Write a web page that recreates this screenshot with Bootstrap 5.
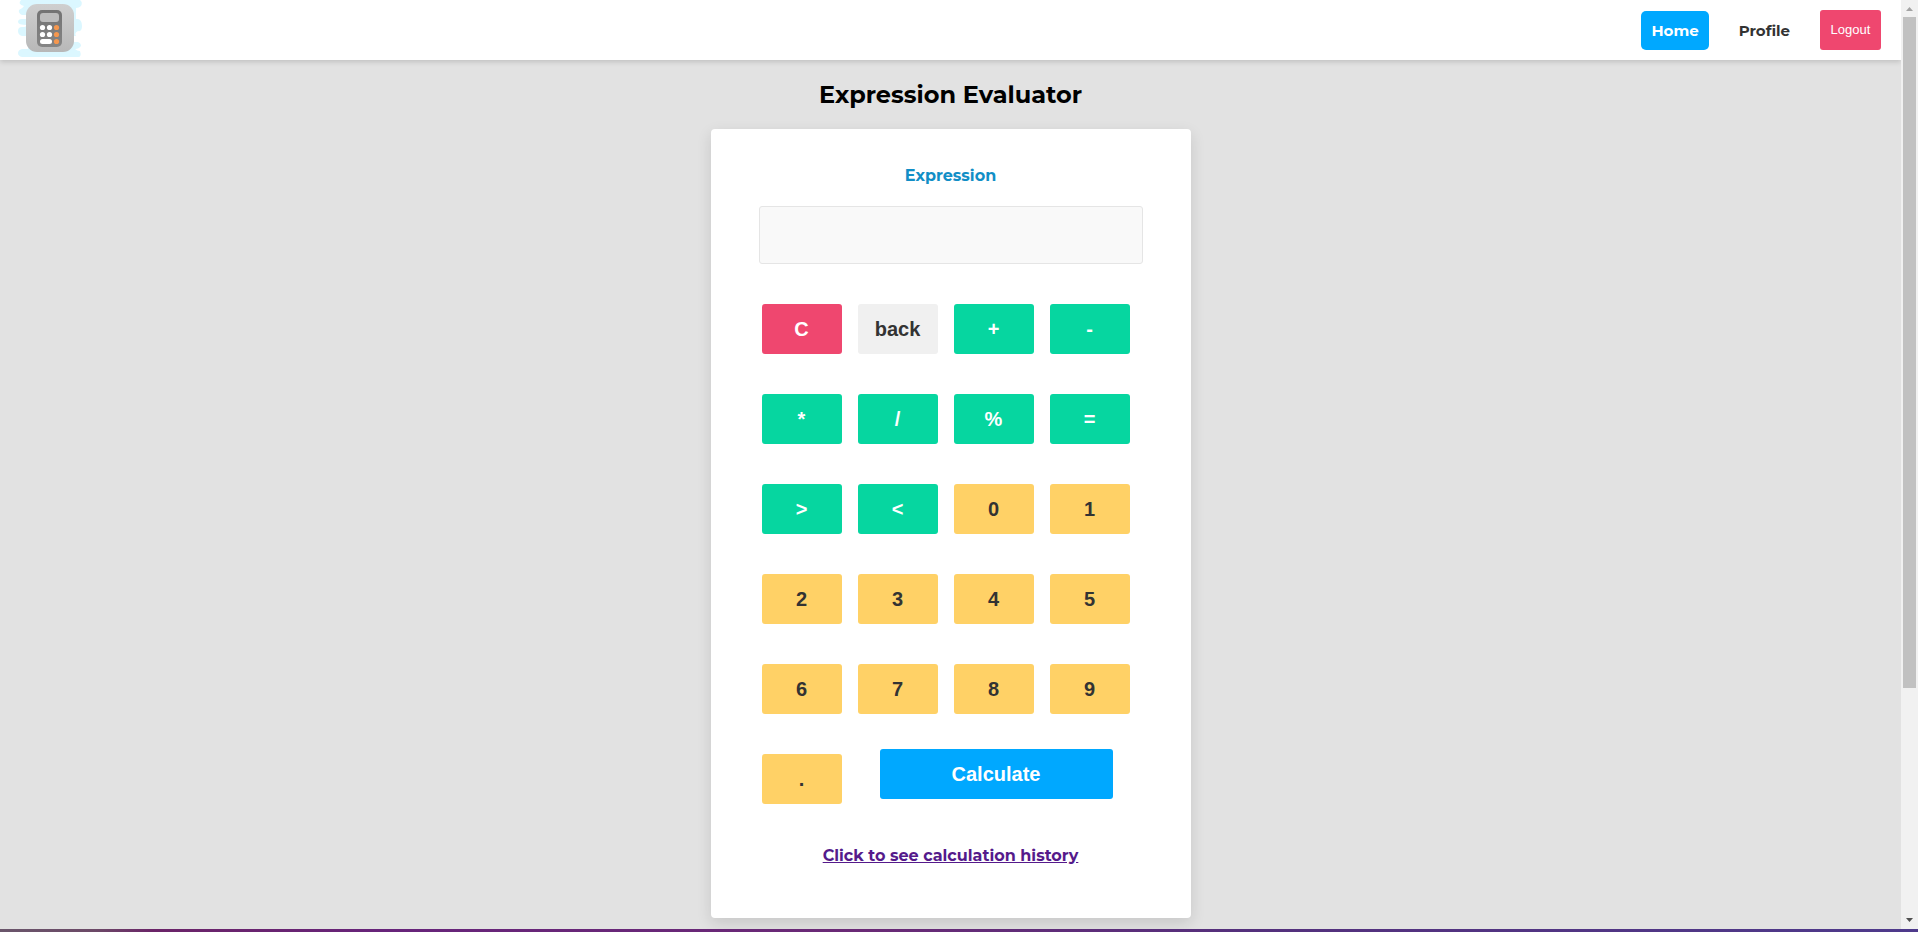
<!DOCTYPE html>
<html lang="en">
<head>
<meta charset="utf-8">
<meta name="viewport" content="width=device-width, initial-scale=1">
<title>Expression Evaluator</title>
<link href="https://cdn.jsdelivr.net/npm/bootstrap@5.3.0/dist/css/bootstrap.min.css" rel="stylesheet">
<script src="https://cdn.jsdelivr.net/npm/bootstrap@5.3.0/dist/js/bootstrap.bundle.min.js" defer></script>
<style>
  body { font-family: Montserrat, Inter, sans-serif; background: #e2e2e2; color: #000; }
  .page-pane { min-width: 0; }
  .site-bar { height: 60px; padding: 0 20px 0 17px; box-shadow: 0 2px 5px rgba(0,0,0,.15); }
  .menu { gap: 20px; }
  .menu-link { font-size: 15px; line-height: 19px; font-weight: 700; color: #333; padding: 10px; border-radius: 5px; }
  .menu-link.active { background: #00a8ff; color: #fff; }
  .logout { font: 13px/20px "Liberation Sans", sans-serif; width: 61px; background: #ef476f; color: #fff; padding: 10px 0; border: 0; border-radius: 3px; }
  .page-title { font-size: 24px; line-height: 30px; font-weight: 700; margin: 20px 0 19px; }
  .calc { width: 480px; max-width: 100%; padding: 37px 48px 52px; border-radius: 4px; box-shadow: 0 5px 15px rgba(0,0,0,.12); }
  .calc-label { font-size: 16px; line-height: 20px; font-weight: 700; color: #118ec6; }
  .calc-input { height: 58px; background: #f9f9f9; border: 1px solid #e5e5e5; border-radius: 3px; margin: 20px 0 40px; }
  .keypad { display: grid; grid-template-columns: repeat(4, 80px); gap: 40px 16px; padding-left: 3px; }
  .last-row { padding-left: 3px; margin-top: 35px; }
  .key { font: 700 20px/24px "Liberation Sans", sans-serif; width: 80px; height: 50px; padding: 0; border: 0; border-radius: 3px; }
  .key-op { background: #06d6a0; color: #fff; }
  .key-num { background: #ffd166; color: #333; }
  .key-clear { background: #ef476f; color: #fff; }
  .key-back { background: #f0f0f0; color: #333; }
  .key-dot { margin-top: 5px; }
  .key-go { width: 233px; background: #00a8ff; color: #fff; }
  .history { font-size: 16px; line-height: 20px; font-weight: 700; color: #551a8b; margin-top: 42px; }
  .scroll-rail { width: 17px; background: #f1f1f1; }
  .scroll-thumb { flex: 0 0 auto; height: 75%; width: 13px; background: #c1c1c1; }
  .scroll-rail svg { display: block; flex: none; }
  .desk-edge { height: 3px; background: linear-gradient(90deg, #6a566b 0, #6c4967 5%, #6b2468 8%, #67247a 20%, #6a2a76 45%, #54307c 65%, #4e3a8b 100%); }
</style>
</head>
<body class="vh-100 d-flex flex-column overflow-hidden">
<div class="d-flex flex-fill overflow-hidden">
  <div class="page-pane flex-fill d-flex flex-column">
    <header class="site-bar bg-white d-flex align-items-center justify-content-between flex-shrink-0">
      <a href="#" aria-label="Calculator home" class="d-block">
        <svg class="d-block" width="66" height="60" viewBox="17 0 66 60">
          <path fill="#dbf7ff" d="M21 0H80Q83 2 81 6Q79 8 76 8V19H78Q82 20 82 26T78 31Q74 33 76 36H74V42H78Q81 43 81 46Q79 49 75 49Q77 51 80 51Q82 57 78 57H22Q18 56 18 53T22 49H28V36H22Q18 35 18 31T22 27Q27 27 27 25Q18 25 18 22T22 19H27V15H22Q18 13 19 10Q23 8 24 6Q17 4 21 0Z"/>
          <defs>
            <linearGradient id="shell" x2="0" y2="1"><stop stop-color="#cfcfcf"/><stop offset="1" stop-color="#b8b8b8"/></linearGradient>
            <linearGradient id="unit" x2="0" y2="1"><stop stop-color="#737373"/><stop offset="1" stop-color="#858585"/></linearGradient>
          </defs>
          <rect x="26" y="4" width="48" height="48" rx="11" fill="url(#shell)"/>
          <rect x="37" y="10" width="25" height="37" rx="5" fill="url(#unit)"/>
          <rect x="40" y="13" width="19" height="9" rx="3" fill="#bdbdbd"/>
          <g fill="#fff"><circle cx="42.500" cy="27.500" r="2.600"/><circle cx="49.500" cy="27.500" r="2.600"/><circle cx="42.500" cy="34.500" r="2.600"/><circle cx="49.500" cy="34.500" r="2.600"/><rect x="40" y="39" width="12" height="5" rx="2.500"/></g>
          <g fill="#f5974e"><circle cx="56.500" cy="27.500" r="2.600"/><circle cx="56.500" cy="34.500" r="2.600"/><circle cx="56.500" cy="41.500" r="2.600"/></g>
        </svg>
      </a>
      <nav class="menu d-flex align-items-center" aria-label="Main">
        <a href="#" class="menu-link active text-decoration-none" aria-current="page">Home</a>
        <a href="#" class="menu-link text-decoration-none">Profile</a>
        <button type="button" class="logout">Logout</button>
      </nav>
    </header>
    <main class="d-flex flex-column align-items-center">
      <h1 class="page-title">Expression Evaluator</h1>
      <form class="calc bg-white d-flex flex-column">
        <label for="expression" class="calc-label text-center">Expression</label>
        <input id="expression" type="text" class="calc-input w-100">
        <div class="keypad">
          <button type="button" class="key key-clear">C</button>
          <button type="button" class="key key-back">back</button>
          <button type="button" class="key key-op">+</button>
          <button type="button" class="key key-op">-</button>
          <button type="button" class="key key-op">*</button>
          <button type="button" class="key key-op">/</button>
          <button type="button" class="key key-op">%</button>
          <button type="button" class="key key-op">=</button>
          <button type="button" class="key key-op">&gt;</button>
          <button type="button" class="key key-op">&lt;</button>
          <button type="button" class="key key-num">0</button>
          <button type="button" class="key key-num">1</button>
          <button type="button" class="key key-num">2</button>
          <button type="button" class="key key-num">3</button>
          <button type="button" class="key key-num">4</button>
          <button type="button" class="key key-num">5</button>
          <button type="button" class="key key-num">6</button>
          <button type="button" class="key key-num">7</button>
          <button type="button" class="key key-num">8</button>
          <button type="button" class="key key-num">9</button>
        </div>
        <div class="last-row d-flex align-items-start">
          <button type="button" class="key key-num key-dot me-3">.</button>
          <div class="flex-fill d-flex justify-content-center pe-2"><button type="submit" class="key key-go">Calculate</button></div>
        </div>
        <a href="#" class="history align-self-center">Click to see calculation history</a>
      </form>
    </main>
  </div>
  <div class="scroll-rail d-flex flex-column align-items-center" aria-hidden="true">
    <svg width="17" height="17" viewBox="0 0 17 17"><path fill="#a3a3a3" d="M5 11 8.500 7 12 11Z"/></svg>
    <div class="flex-fill w-100 d-flex flex-column align-items-center"><div class="scroll-thumb"></div></div>
    <svg width="17" height="17" viewBox="0 0 17 17"><path fill="#505050" d="M5 6H12L8.500 10Z"/></svg>
  </div>
</div>
<div class="desk-edge flex-shrink-0"></div>
</body>
</html>
